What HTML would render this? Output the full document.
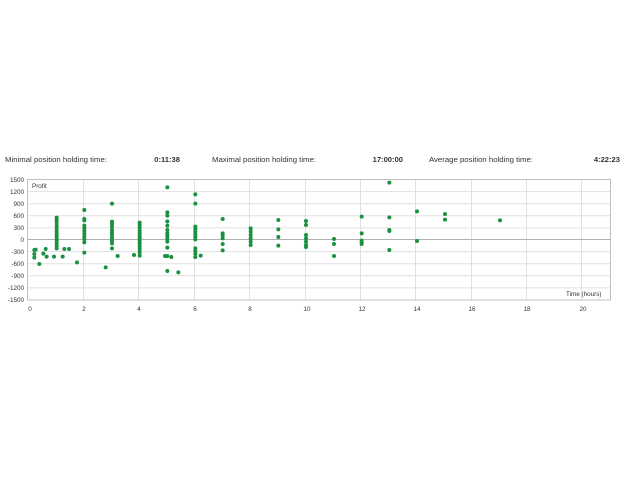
<!DOCTYPE html>
<html><head><meta charset="utf-8"><style>
html,body{margin:0;padding:0;background:#fff;width:640px;height:480px;overflow:hidden}
svg{display:block}
text{font-family:"Liberation Sans",sans-serif;fill:#333}
</style></head><body>
<svg width="640" height="480" viewBox="0 0 640 480">
<g font-size="7.6">
<text x="5" y="162" textLength="102" lengthAdjust="spacingAndGlyphs">Minimal position holding time:</text>
<text x="180" y="162" text-anchor="end" font-weight="bold" fill="#111">0:11:38</text>
<text x="212" y="162" textLength="104" lengthAdjust="spacingAndGlyphs">Maximal position holding time:</text>
<text x="403" y="162" text-anchor="end" font-weight="bold" fill="#111">17:00:00</text>
<text x="429" y="162" textLength="104" lengthAdjust="spacingAndGlyphs">Average position holding time:</text>
<text x="620" y="162" text-anchor="end" font-weight="bold" fill="#111">4:22:23</text>
</g>
<g stroke="#e0e0e0" stroke-width="1">
<line x1="27" y1="191.6" x2="611" y2="191.6"/><line x1="27" y1="203.7" x2="611" y2="203.7"/>
<line x1="27" y1="215.8" x2="611" y2="215.8"/><line x1="27" y1="227.9" x2="611" y2="227.9"/>
<line x1="27" y1="251.6" x2="611" y2="251.6"/><line x1="27" y1="263.7" x2="611" y2="263.7"/>
<line x1="27" y1="275.8" x2="611" y2="275.8"/><line x1="27" y1="287.9" x2="611" y2="287.9"/>
<line x1="83.5" y1="179" x2="83.5" y2="300"/><line x1="138.5" y1="179" x2="138.5" y2="300"/>
<line x1="194.5" y1="179" x2="194.5" y2="300"/><line x1="249.5" y1="179" x2="249.5" y2="300"/>
<line x1="305.5" y1="179" x2="305.5" y2="300"/><line x1="360.5" y1="179" x2="360.5" y2="300"/>
<line x1="415.5" y1="179" x2="415.5" y2="300"/><line x1="471.5" y1="179" x2="471.5" y2="300"/>
<line x1="526.5" y1="179" x2="526.5" y2="300"/><line x1="581.5" y1="179" x2="581.5" y2="300"/>
</g>
<line x1="27" y1="239.5" x2="611" y2="239.5" stroke="#b0b0b0"/>
<rect x="27.5" y="179.5" width="583" height="120.5" fill="none" stroke="#c0c0c0"/>
<g font-size="6.3" text-anchor="end">
<text x="24" y="182">1500</text><text x="24" y="194">1200</text><text x="24" y="206">900</text>
<text x="24" y="218">600</text><text x="24" y="230">300</text><text x="24" y="242">0</text>
<text x="24" y="254">-300</text><text x="24" y="266">-600</text><text x="24" y="278">-900</text>
<text x="24" y="290">-1200</text><text x="24" y="302">-1500</text>
</g>
<g font-size="6.3" text-anchor="middle">
<text x="30" y="311">0</text><text x="84" y="311">2</text><text x="139" y="311">4</text>
<text x="195" y="311">6</text><text x="250" y="311">8</text><text x="307" y="311">10</text>
<text x="362" y="311">12</text><text x="417" y="311">14</text><text x="472" y="311">16</text>
<text x="527" y="311">18</text><text x="583" y="311">20</text>
</g>
<text x="32" y="188" font-size="6.3">Profit</text>
<text x="566" y="296" font-size="6.3">Time (hours)</text>
<g fill="#1a9140" transform="translate(0,145) scale(0.33333)">
<circle cx="103" cy="315" r="6"/><circle cx="103" cy="327" r="6"/><circle cx="103" cy="338" r="6"/>
<circle cx="107" cy="314" r="6"/><circle cx="118" cy="357" r="6"/><circle cx="130" cy="326" r="6"/>
<circle cx="137" cy="312" r="6"/><circle cx="140" cy="335" r="6"/><circle cx="162" cy="335" r="6"/>
<circle cx="170" cy="218" r="6"/><circle cx="170" cy="225" r="6"/><circle cx="170" cy="232" r="6"/><circle cx="170" cy="242" r="6"/><circle cx="170" cy="250" r="6"/><circle cx="170" cy="258" r="6"/><circle cx="170" cy="265" r="6"/><circle cx="170" cy="272" r="6"/><circle cx="170" cy="280" r="6"/><circle cx="170" cy="287" r="6"/><circle cx="170" cy="295" r="6"/><circle cx="170" cy="302" r="6"/><circle cx="170" cy="310" r="6"/>
<circle cx="188" cy="335" r="6"/><circle cx="193" cy="312" r="6"/><circle cx="207" cy="312" r="6"/><circle cx="231" cy="352" r="6"/>
<circle cx="253" cy="195" r="6"/><circle cx="253" cy="222" r="6"/><circle cx="253" cy="226" r="6"/><circle cx="253" cy="242" r="6"/><circle cx="253" cy="250" r="6"/><circle cx="253" cy="258" r="6"/><circle cx="253" cy="266" r="6"/><circle cx="253" cy="274" r="6"/><circle cx="253" cy="282" r="6"/><circle cx="253" cy="292" r="6"/><circle cx="253" cy="323" r="6"/>
<circle cx="317" cy="367" r="6"/>
<circle cx="336" cy="176" r="6"/><circle cx="336" cy="230" r="6"/><circle cx="336" cy="237" r="6"/><circle cx="336" cy="245" r="6"/><circle cx="336" cy="255" r="6"/><circle cx="336" cy="263" r="6"/><circle cx="336" cy="270" r="6"/><circle cx="336" cy="278" r="6"/><circle cx="336" cy="287" r="6"/><circle cx="336" cy="295" r="6"/><circle cx="336" cy="310" r="6"/>
<circle cx="353" cy="333" r="6"/><circle cx="402" cy="330" r="6"/>
<circle cx="419" cy="233" r="6"/><circle cx="419" cy="240" r="6"/><circle cx="419" cy="248" r="6"/><circle cx="419" cy="256" r="6"/><circle cx="419" cy="264" r="6"/><circle cx="419" cy="272" r="6"/><circle cx="419" cy="280" r="6"/><circle cx="419" cy="288" r="6"/><circle cx="419" cy="296" r="6"/><circle cx="419" cy="305" r="6"/><circle cx="419" cy="313" r="6"/><circle cx="419" cy="322" r="6"/><circle cx="419" cy="332" r="6"/>
<circle cx="502" cy="127" r="6"/><circle cx="502" cy="202" r="6"/><circle cx="502" cy="212" r="6"/><circle cx="502" cy="229" r="6"/><circle cx="502" cy="242" r="6"/><circle cx="502" cy="255" r="6"/><circle cx="502" cy="265" r="6"/><circle cx="502" cy="272" r="6"/><circle cx="502" cy="280" r="6"/><circle cx="502" cy="290" r="6"/><circle cx="502" cy="308" r="6"/><circle cx="502" cy="333" r="6"/><circle cx="502" cy="378" r="6"/>
<circle cx="495" cy="333" r="6"/><circle cx="514" cy="336" r="6"/><circle cx="535" cy="382" r="6"/>
<circle cx="586" cy="148" r="6"/><circle cx="586" cy="176" r="6"/><circle cx="586" cy="245" r="6"/><circle cx="586" cy="252" r="6"/><circle cx="586" cy="260" r="6"/><circle cx="586" cy="268" r="6"/><circle cx="586" cy="275" r="6"/><circle cx="586" cy="283" r="6"/><circle cx="586" cy="310" r="6"/><circle cx="586" cy="318" r="6"/><circle cx="586" cy="326" r="6"/><circle cx="586" cy="336" r="6"/>
<circle cx="602" cy="332" r="6"/>
<circle cx="668" cy="222" r="6"/><circle cx="668" cy="265" r="6"/><circle cx="668" cy="272" r="6"/><circle cx="668" cy="280" r="6"/><circle cx="668" cy="297" r="6"/><circle cx="668" cy="316" r="6"/>
<circle cx="752" cy="250" r="6"/><circle cx="752" cy="260" r="6"/><circle cx="752" cy="270" r="6"/><circle cx="752" cy="280" r="6"/><circle cx="752" cy="290" r="6"/><circle cx="752" cy="300" r="6"/>
<circle cx="835" cy="225" r="6"/><circle cx="835" cy="253" r="6"/><circle cx="835" cy="276" r="6"/><circle cx="835" cy="302" r="6"/>
<circle cx="918" cy="228" r="6"/><circle cx="918" cy="240" r="6"/><circle cx="918" cy="270" r="6"/><circle cx="918" cy="280" r="6"/><circle cx="918" cy="290" r="6"/><circle cx="918" cy="300" r="6"/><circle cx="918" cy="306" r="6"/>
</g>
<g fill="#1a9140" transform="translate(320,145) scale(0.33333)">
<circle cx="42" cy="282" r="6"/><circle cx="42" cy="297" r="6"/><circle cx="42" cy="333" r="6"/>
<circle cx="125" cy="215" r="6"/><circle cx="125" cy="265" r="6"/><circle cx="125" cy="287" r="6"/><circle cx="125" cy="292" r="6"/><circle cx="125" cy="297" r="6"/>
<circle cx="208" cy="113" r="6"/><circle cx="208" cy="217" r="6"/><circle cx="208" cy="255" r="6"/><circle cx="208" cy="258" r="6"/><circle cx="208" cy="315" r="6"/>
<circle cx="291" cy="199" r="6"/><circle cx="291" cy="288" r="6"/>
<circle cx="375" cy="207" r="6"/><circle cx="375" cy="224" r="6"/>
<circle cx="540" cy="226" r="6"/>
</g>
</svg>
</body></html>
